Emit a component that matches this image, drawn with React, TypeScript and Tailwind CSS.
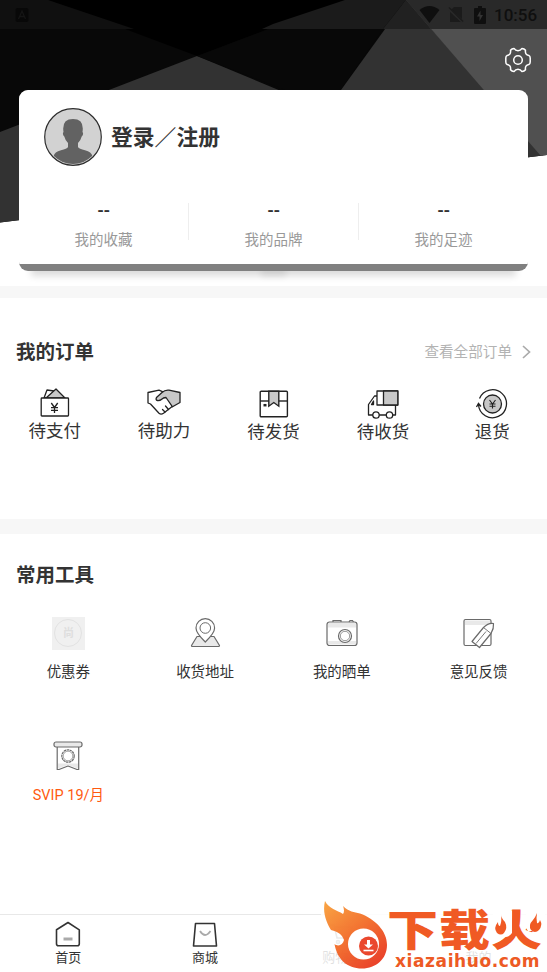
import React from 'react';

interface ItemProps {
  label: string;
  icon: React.ReactNode;
}

const HeaderBackground = () => (
  <svg className="absolute left-0 top-0" width="547" height="223" viewBox="0 0 547 223">
    <clipPath id="header">
      <polygon points="0,0 547,0 547,155 0,222.5" />
    </clipPath>
    <g clipPath="url(#header)">
      <rect width="547" height="223" fill="#080808" />
      <polygon points="48,0 345,0 197,56" fill="#000" />
      <polygon points="0,132 197,56 547,202 547,223 0,223" fill="#323232" />
      <polygon points="197,56 285,90 341,90 383,29 300,17" fill="#080808" />
      <polygon points="341,90 406,0 560,175 341,175" fill="#323232" />
      <polygon points="406,0 547,0 547,163" fill="#505050" />
      <polygon points="0,0 48,0 134,29 0,29" fill="#101010" />
      <polygon points="345,0 406,0 383,29 262,29 273,24" fill="#1b1b1b" />
      <polygon points="406,0 431,29 383,29" fill="#212121" />
      <polygon points="406,0 547,0 547,29 431,29" fill="#292929" />
    </g>
  </svg>
);

const StatusBar = () => (
  <div className="relative flex h-[29px] items-center justify-between pl-[15px] pr-[10px]">
    <svg width="14" height="14" viewBox="0 0 14 14">
      <rect x="0.5" width="13" height="14" rx="2" fill="#080808" />
      <path d="M3.500 11 7 3l3.500 8M5 8.500h4" fill="none" stroke="#151515" strokeWidth="1.300" />
    </svg>
    <div className="flex items-center text-[#0f0f0f]">
      <svg width="21" height="17" viewBox="0 0 21 17" fill="currentColor">
        <path d="M0.500 4Q10.500-4 20.500 4L10.500 17Z" />
      </svg>
      <svg className="ml-[8px]" width="16" height="17" viewBox="0 0 16 17">
        <path d="M2 5 6 1h8v15H2Z" fill="#1b1b1b" />
        <path d="m0 2 15 14" stroke="#292929" strokeWidth="3" />
        <path d="m1 1.500 14 14" stroke="#1b1b1b" strokeWidth="1.300" />
      </svg>
      <svg className="ml-[10px]" width="12" height="18" viewBox="0 0 12 18">
        <path d="M4 0h4v2h3q1 0 1 1v14q0 1-1 1H1q-1 0-1-1V3q0-1 1-1h3Z" fill="currentColor" />
        <path d="M6.500 4.500 3 10.500h2.500v4.500L9 9H6.500Z" fill="#333" />
      </svg>
      <span className="ml-[8px] mt-[2px] w-[43px] whitespace-nowrap text-[17px] font-medium leading-[29px]">10:56</span>
    </div>
  </div>
);

const GearIcon = () => (
  <svg width="26" height="26" viewBox="0 0 26 26" fill="none" stroke="#fff" strokeWidth="1.500" strokeLinejoin="round">
    <path d="M9 1.400Q6.800 1.500 5.500 3.200 6.200 7.800 2.200 8.400 0.800 9 0.800 11V15Q0.800 17 2.200 17.600 6.200 18.200 5.500 22.800 6.800 24.500 9 24.600 10.500 22.300 13 22.300T17 24.600Q19.200 24.500 20.500 22.800 19.800 18.200 23.800 17.600 25.200 17 25.200 15V11Q25.200 9 23.800 8.400 19.800 7.800 20.500 3.200 19.200 1.500 17 1.400 15.500 3.700 13 3.700T9 1.400Z" />
    <circle cx="13" cy="13" r="4.300" />
  </svg>
);

const Avatar = () => (
  <svg width="58" height="58" viewBox="0 0 58 58">
    <clipPath id="avatar">
      <circle cx="29" cy="29" r="27" />
    </clipPath>
    <circle cx="29" cy="29" r="28.300" fill="#d2d2d2" stroke="#2d2d2d" strokeWidth="1.200" />
    <g clipPath="url(#avatar)" fill="#626262">
      <path d="M19.500 24Q17.500 11 29 11T38.500 24q1.500 2-.8 4.500-1 4-3.700 6.500v4q1 2 7 3.300 6.500 1.500 7.500 6.200L42 58H16l-6.500-9.500q1-4.700 7.500-6.200 6-1.300 7-3.300v-4q-2.700-2.500-3.700-6.500-2.300-2.500-.8-4.500Z" />
    </g>
  </svg>
);

const PayIcon = () => (
  <svg width="30" height="29" viewBox="0 0 30 29" fill="none" stroke="#222" strokeWidth="1.300" strokeLinejoin="round">
    <path d="m4 10 3-8 7 1-5 7Z" fill="#fff" />
    <path d="m6 10 10-9 9 9Z" fill="#c8c8c8" />
    <rect x="1.200" y="10" width="27.300" height="18" rx="0.700" fill="#fff" />
    <path d="m11.300 15 3.200 4.500 3.200-4.500M14.500 19.500V25M11 19.700h7M11 22.300h7" />
  </svg>
);

const HandshakeIcon = () => (
  <svg width="34" height="26" viewBox="0 0 34 26" fill="none" stroke="#222" strokeWidth="1.300" strokeLinejoin="round" strokeLinecap="round">
    <path d="M1 3.500 12 1.200l4 1.600M1 3.500v10.500l2.500 1 8.500 9.300q2 1.500 4.500 0l9-7" />
    <path d="M33 3.500 22 1.200q-4-.5-7 2.300L9.500 8.500q-1.200 2.500 1 3 3 .3 6-2.500l2.500-.5 6.500 9.300L33 13.500Z" fill="#c8c8c8" />
    <path d="m15.500 20.500 2.500 2.500m.5-6 3 3.500" />
  </svg>
);

const BoxIcon = () => (
  <svg width="30" height="28" viewBox="0 0 30 28" fill="none" stroke="#222" strokeWidth="1.400">
    <rect x="1.200" y="1.200" width="27.200" height="25.500" rx="1" />
    <path d="M1 11h28" />
    <path d="M9.800 1.200v15l5-3.700 5 3.700v-15Z" fill="#c8c8c8" />
    <path d="M4.500 15.200h3" strokeWidth="2.500" />
  </svg>
);

const TruckIcon = () => (
  <svg width="32" height="29" viewBox="0 0 32 29" fill="none" stroke="#222" strokeWidth="1.300" strokeLinejoin="round">
    <path d="M10 6H7.500L1.500 14.500v10.500h27V15M6.500 11V14.500H4.500Z" />
    <rect x="10" y="1" width="20.800" height="14" fill="#fff" />
    <rect x="16.500" y="1" width="14.300" height="14" fill="#c8c8c8" />
    <circle cx="9" cy="25" r="3.200" fill="#fff" />
    <circle cx="22.500" cy="25" r="3.200" fill="#fff" />
  </svg>
);

const RefundIcon = () => (
  <svg width="32" height="30" viewBox="0 0 32 30" fill="none" stroke="#222" strokeWidth="1.300">
    <path d="M3.500 9.500A14 14 0 1 1 2.500 15.500M0.500 18 2.500 14.500 5 17.500" />
    <circle cx="16.500" cy="15" r="9" fill="#c8c8c8" />
    <path d="m13.500 11 3 4 3-4M16.500 15v4.500M13.500 15h6M13.500 17.300h6" strokeWidth="1.100" />
  </svg>
);

const CouponIcon = () => (
  <div className="relative flex h-[33px] w-[33px] items-center justify-center bg-[#f0f0f0]">
    <div className="absolute inset-[2.500px] rounded-full border border-[#e2e2e2]" />
    <span className="text-[11px] font-bold leading-none text-[#dedede]">尚</span>
  </div>
);

const AddressIcon = () => (
  <svg width="31" height="30" viewBox="0 0 31 30" fill="none" stroke="#6a6a6a" strokeWidth="1.200" strokeLinejoin="round">
    <path d="M7 18.500h17l5.500 9q0 1-1 1h-26q-1 0-1-1Z" fill="#e9e9e9" />
    <path d="M15.300 24Q6 15 6 10a9.300 9.300 0 0 1 18.600 0Q24.600 15 15.300 24Z" fill="#fff" />
    <circle cx="15.300" cy="10" r="5.300" strokeWidth="1" />
  </svg>
);

const CameraIcon = () => (
  <svg width="32" height="28" viewBox="0 0 32 28" fill="none" stroke="#6a6a6a" strokeWidth="1.200">
    <path d="M7 3V1.500h8V3M23 3l1-1.500h2.500l1 1.500" />
    <path d="M2 4h28v4.500H2Zm0 18h28v3.500H2Z" fill="#e9e9e9" stroke="none" />
    <rect x="1" y="3" width="30" height="23.500" rx="2.500" />
    <circle cx="19" cy="17" r="6.500" fill="#fff" />
    <circle cx="19" cy="17" r="4.700" strokeWidth="0.700" />
  </svg>
);

const FeedbackIcon = () => (
  <svg width="32" height="31" viewBox="0 0 32 31" fill="none" stroke="#6a6a6a" strokeWidth="1.200" strokeLinejoin="round">
    <path d="M2 2.500h25v4.500H2Z" fill="#e9e9e9" stroke="none" />
    <rect x="1" y="1.500" width="27" height="26" rx="1.500" />
    <path d="M20.500 9.500q5-5 10-4 .5 5-2.500 10L16.500 29.500 9 23.500Z" fill="#fff" />
    <path d="m20.500 9.500 7.500 6" strokeWidth="0.900" />
    <path d="M23 13.500 13 25.500" strokeWidth="0.900" />
  </svg>
);

const SvipIcon = () => (
  <svg width="30" height="30" viewBox="0 0 30 30" fill="none" stroke="#6a6a6a" strokeWidth="1.200" strokeLinejoin="round">
    <path d="M5 22.500h20v5L15 24l-10 3.500Z" fill="#e9e9e9" stroke="none" />
    <path d="M4.200 5h21.500v23.500H24L15 25l-9 3.500H4.200Z" />
    <rect x="1" y="1" width="28" height="5" rx="2" fill="#e9e9e9" />
    <circle cx="15" cy="15" r="6.200" strokeDasharray="2.500 .5" />
    <circle cx="15" cy="15" r="4.800" strokeWidth="0.600" />
  </svg>
);

const HomeIcon = () => (
  <svg width="26" height="26" viewBox="0 0 26 26" fill="none" stroke="#333" strokeWidth="1.600" strokeLinejoin="round">
    <path d="m13 1.500 11.300 7.300v14q0 2-2 2H3.500q-2 0-2-2v-14Z" />
    <path d="M8.500 18h9" stroke="#aaa" strokeWidth="3" />
  </svg>
);

const MallIcon = () => (
  <svg width="26" height="26" viewBox="0 0 26 26" fill="none" stroke="#333" strokeWidth="1.600" strokeLinejoin="round">
    <path d="M3.500 2.500h19l2 22.500h-23Z" />
    <path d="M8 10q5 8 10.500 0" stroke="#aaa" strokeWidth="1.800" />
  </svg>
);

const CartIcon = () => (
  <svg width="26" height="26" viewBox="0 0 26 26" fill="none" stroke="#777" strokeWidth="1.600">
    <path d="M1 4h4l3 13h12l3-11H6" />
    <circle cx="9" cy="21" r="1.500" />
    <circle cx="19" cy="21" r="1.500" />
  </svg>
);

const StatItem: React.FC<{ label: string }> = ({ label }) => (
  <div className="flex h-[37px] flex-1 flex-col items-center border-r border-[#eee] last:border-r-0">
    <span className="mt-[-6px] text-[17px] font-bold leading-[26px] tracking-[-0.500px] text-[#333]">--</span>
    <span className="mt-[7px] text-[14.5px] leading-[22px] text-[#999]">{label}</span>
  </div>
);

const OrderItem: React.FC<ItemProps & { low?: boolean }> = ({ label, icon, low }) => (
  <div className="flex flex-1 flex-col items-center">
    <div className={`flex items-center ${low ? 'h-[32px] pt-[2px]' : 'h-[31px] pb-px'}`}>{icon}</div>
    <span className="text-[17.500px] leading-[26px] text-[#333]">{label}</span>
  </div>
);

const ToolItem: React.FC<ItemProps & { highlight?: boolean }> = ({ label, icon, highlight }) => (
  <div className="flex h-[123px] flex-col items-center">
    <div className="flex h-[34px] items-center">{icon}</div>
    <span className={`mt-[12px] text-[14.5px] leading-[22px] ${highlight ? 'text-[#ff5a10]' : 'text-[#333]'}`}>{label}</span>
  </div>
);

const TabItem: React.FC<ItemProps> = ({ label, icon }) => (
  <div className="flex flex-col items-center pt-[6px] text-[#333]">
    <div className="h-[26px]">{icon}</div>
    <span className="mt-[1px] text-[13px] leading-[20px]">{label}</span>
  </div>
);

const Brand = () => (
  <div className="absolute bottom-0 right-0 h-[77px] w-[226px]">
    <div className="absolute bottom-0 left-0 top-[8px] w-full bg-white/85" />
    <svg className="absolute left-0 top-0 opacity-95" width="226" height="77" viewBox="0 0 226 77">
      <defs>
        <linearGradient id="flame" x1="0" y1="0" x2="0.800" y2="1">
          <stop offset="0" stopColor="#f9a13a" />
          <stop offset="0.500" stopColor="#f36d28" />
          <stop offset="1" stopColor="#e8371f" />
        </linearGradient>
      </defs>
      <path
        d="M4 6C8 14 16 15 22 19Q24 16 22 11C28 17 33 17 39 18.500 54 24 66 36 66 50 66 64 55 73.500 41 73.500 26 73.500 16 64 13.500 49 17 52 22 50 23 45 21 39 17 37 10 35 6 28 1 18 4 6Z"
        fill="url(#flame)"
      />
      <circle cx="42.500" cy="49" r="15.500" fill="#fff" />
      <circle cx="47.500" cy="51" r="9.500" fill="#e93f23" />
      <path d="M46 45h3v4.500h3l-4.500 4-4.500-4h3Z" fill="#fff" />
      <path d="M42.500 55.500h10" stroke="#fff" strokeWidth="1.600" />
    </svg>
    <div className="absolute left-[66px] top-[17px] flex h-[40px] w-[155px] origin-top scale-y-[0.840] justify-between text-[51px] font-black leading-[48px] text-[#f05a24]">
      <span>下</span>
      <span>载</span>
      <span>火</span>
    </div>
    {/* small flames on both sides of the last character */}
    <svg className="absolute left-[172px] top-[16px]" width="52" height="26" viewBox="0 0 52 26">
      <path d="M0 0h19v22q-3 4-6 4H0ZM33 0h19v20H35l-2-3Z" fill="#fff" />
      <path d="M8 3q0 4 4 8 3 6-1 11-3 3-7 0-4-5 1-11 0 4 2 4 2-5 1-12Z" fill="#f05a24" />
      <path d="M44 2q-2 5-4 7-5 5-2 10 4 4 8 0 4-5 1-10-1 4-3 3-1-5 0-10Z" fill="#f05a24" />
    </svg>
    <div className="absolute left-[74px] top-[59px] whitespace-nowrap font-['DejaVu_Sans'] text-[17px] font-bold leading-[15px] tracking-[0.600px] text-[#ed5a24]">
      xiazaihuo.com
    </div>
  </div>
);

export default function App() {
  return (
    <div className="relative flex h-[972px] w-[547px] flex-col overflow-hidden bg-white font-['Roboto','Noto_Sans_CJK_SC',sans-serif]">
      <div className="relative h-[286px] shrink-0">
        <HeaderBackground />
        <StatusBar />
        <div className="relative flex h-[61px] items-center justify-end pr-[16px]">
          <GearIcon />
        </div>
        <div className="relative mx-[19px] h-[181px]">
          <div className="absolute bottom-0 left-[12px] right-[12px] h-[20px] shadow-[0_5px_7px_rgba(0,0,0,0.14)]" />
          <div className="absolute bottom-0 left-[242px] h-[20px] w-[25px] shadow-[0_6px_6px_rgba(0,0,0,0.07)]" />
          <div className="relative h-full overflow-hidden rounded-[9px] bg-[#808080]">
            <div className="h-[174px] bg-white pt-[18px]">
              <div className="flex h-[58px] items-center pl-[25px]">
                <Avatar />
                <span className="ml-[9px] mt-[3px] text-[21.800px] font-bold text-[#333]">
                  登录<span className="font-medium">／</span>注册
                </span>
              </div>
              <div className="mt-[37px] flex">
                <StatItem label="我的收藏" />
                <StatItem label="我的品牌" />
                <StatItem label="我的足迹" />
              </div>
            </div>
          </div>
        </div>
      </div>

      <div className="h-[12px] shrink-0 bg-[#f7f7f7]" />

      {/* orders */}
      <div className="h-[221px] shrink-0">
        <div className="flex items-center justify-between pl-[16px] pr-[16px] pt-[40px]">
          <span className="text-[19.500px] font-bold leading-[30px] text-[#333]">我的订单</span>
          <div className="flex items-center text-[14.600px] text-[#b3b3b3]">
            查看全部订单
            <svg className="ml-[10px] mb-[2px]" width="9" height="14" viewBox="0 0 9 14" fill="none" stroke="#aaa" strokeWidth="1.700">
              <path d="m1 1 6.500 6L1 13" />
            </svg>
          </div>
        </div>
        <div className="mt-[19px] flex">
          <OrderItem label="待支付" icon={<PayIcon />} />
          <OrderItem label="待助力" icon={<HandshakeIcon />} />
          <OrderItem label="待发货" icon={<BoxIcon />} low />
          <OrderItem label="待收货" icon={<TruckIcon />} low />
          <OrderItem label="退货" icon={<RefundIcon />} low />
        </div>
      </div>

      <div className="h-[15px] shrink-0 bg-[#f7f7f7]" />

      {/* tools */}
      <div className="flex-1">
        <div className="pl-[16px] pt-[27px] text-[19.500px] font-bold leading-[30px] text-[#333]">常用工具</div>
        <div className="mt-[25px] grid grid-cols-4">
          <ToolItem label="优惠券" icon={<CouponIcon />} />
          <ToolItem label="收货地址" icon={<AddressIcon />} />
          <ToolItem label="我的晒单" icon={<CameraIcon />} />
          <ToolItem label="意见反馈" icon={<FeedbackIcon />} />
          <ToolItem label="SVIP 19/月" icon={<SvipIcon />} highlight />
        </div>
      </div>

      <div className="grid h-[58px] shrink-0 grid-cols-4 border-t border-[#e8e8e8]">
        <TabItem label="首页" icon={<HomeIcon />} />
        <TabItem label="商城" icon={<MallIcon />} />
        <TabItem label="购物车" icon={<CartIcon />} />
        <TabItem label="我的" icon={null} />
      </div>
      <Brand />
    </div>
  );
}
